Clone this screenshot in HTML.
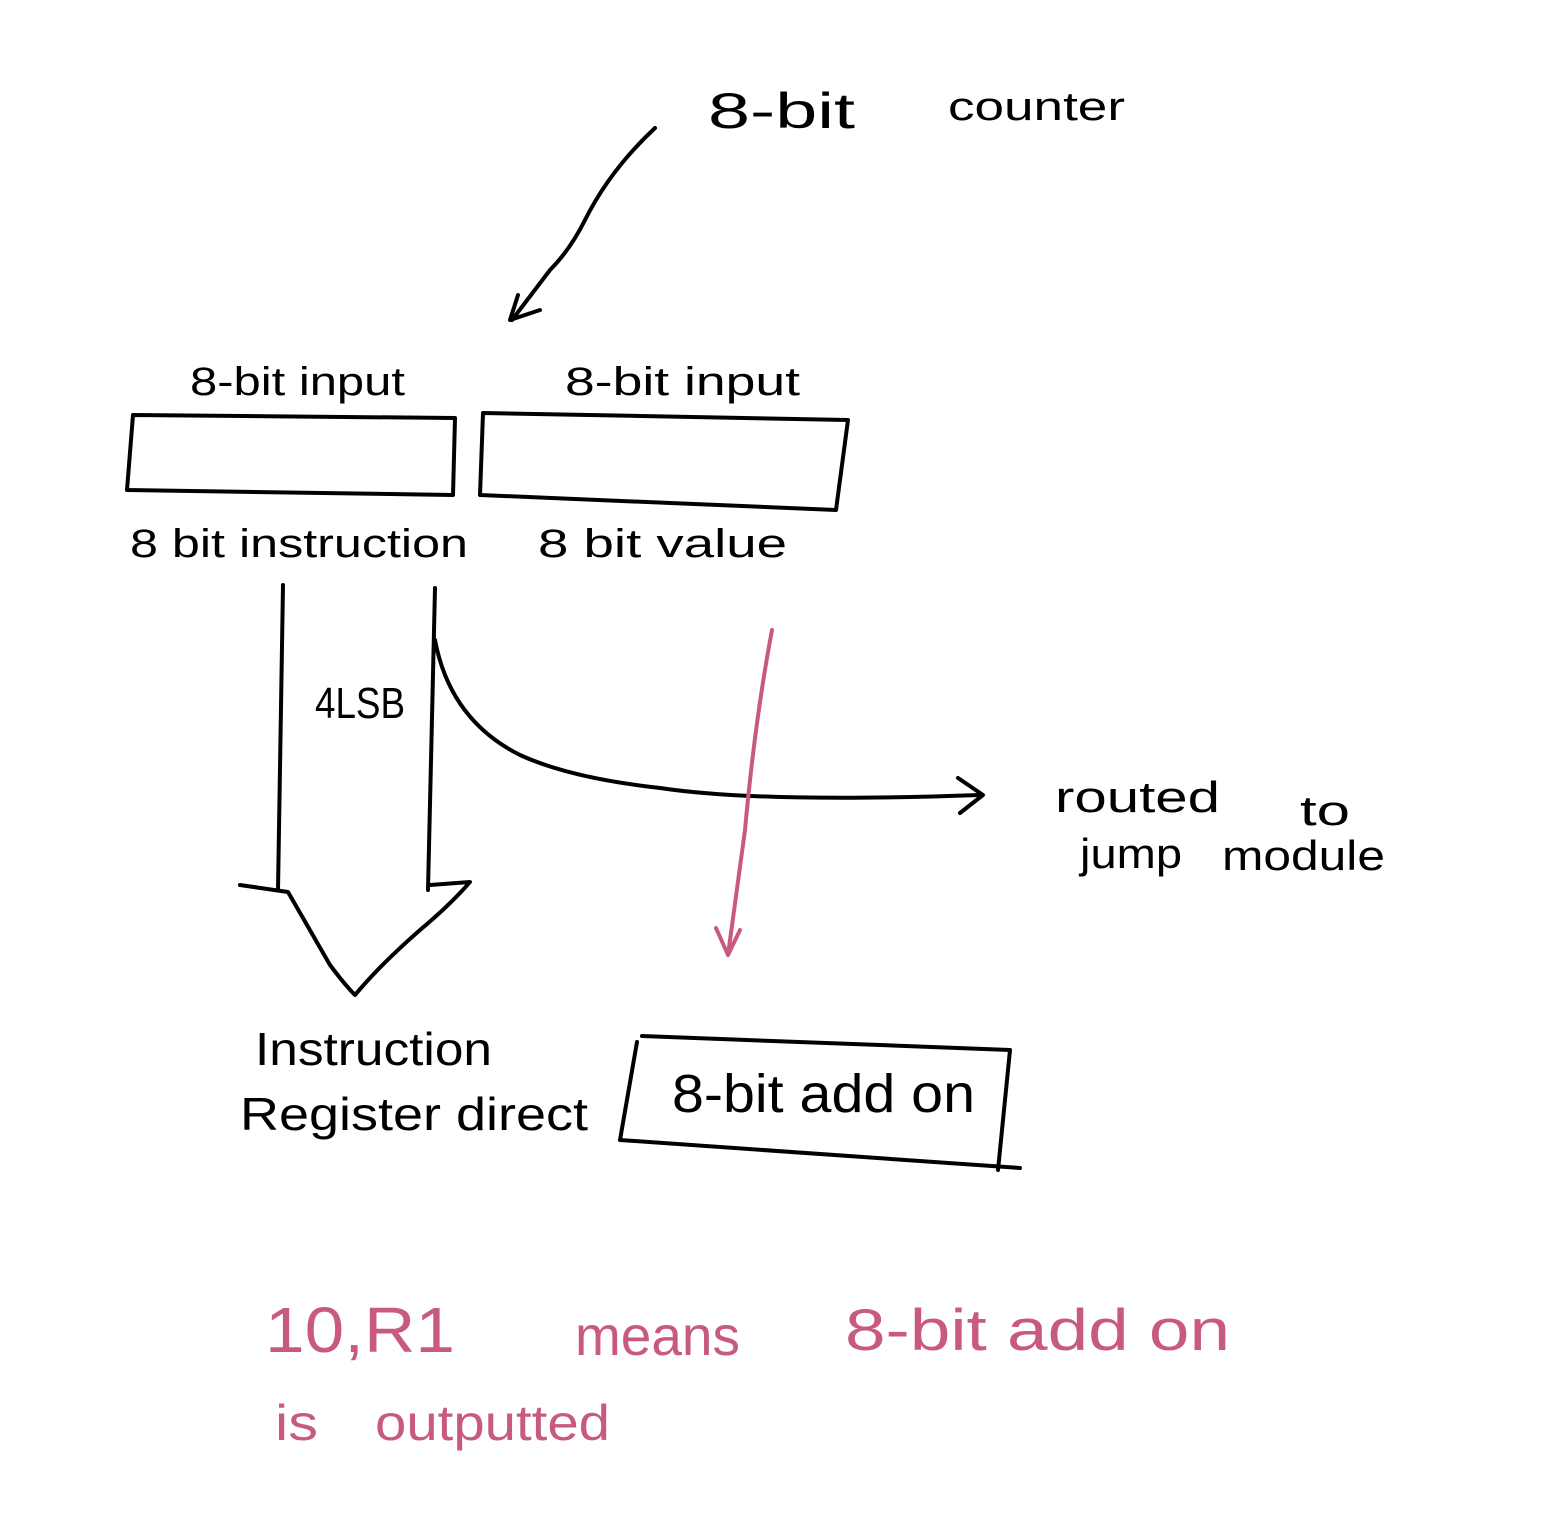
<!DOCTYPE html>
<html><head><meta charset="utf-8"><style>
html,body{margin:0;padding:0;background:#fff;width:1564px;height:1527px;overflow:hidden}
svg{display:block}
text{font-family:"Liberation Sans",sans-serif;fill:#000}
.p{fill:#c85a80}
</style></head><body>
<svg width="1564" height="1527" viewBox="0 0 1564 1527" fill="none" stroke="#000" stroke-width="4" stroke-linecap="round" stroke-linejoin="round">
<g stroke="none" lengthAdjust="spacingAndGlyphs">
<text x="708" y="128" font-size="50" textLength="147" lengthAdjust="spacingAndGlyphs">8-bit</text>
<text x="948" y="120" font-size="40" textLength="177" lengthAdjust="spacingAndGlyphs">counter</text>
<text x="190" y="395" font-size="40" textLength="215" lengthAdjust="spacingAndGlyphs">8-bit input</text>
<text x="565" y="395" font-size="40" textLength="235" lengthAdjust="spacingAndGlyphs">8-bit input</text>
<text x="130" y="557" font-size="40" textLength="338" lengthAdjust="spacingAndGlyphs">8 bit instruction</text>
<text x="538" y="557" font-size="40" textLength="249" lengthAdjust="spacingAndGlyphs">8 bit value</text>
<text x="315" y="718" font-size="44" textLength="90" lengthAdjust="spacingAndGlyphs">4LSB</text>
<text x="1055" y="812" font-size="44" textLength="165" lengthAdjust="spacingAndGlyphs">routed</text>
<text x="1300" y="825" font-size="42" textLength="50" lengthAdjust="spacingAndGlyphs">to</text>
<text x="1080" y="868" font-size="42" textLength="102" lengthAdjust="spacingAndGlyphs">jump</text>
<text x="1222" y="870" font-size="42" textLength="163" lengthAdjust="spacingAndGlyphs">module</text>
<text x="255" y="1065" font-size="46" textLength="237" lengthAdjust="spacingAndGlyphs">Instruction</text>
<text x="240" y="1130" font-size="46" textLength="348" lengthAdjust="spacingAndGlyphs">Register direct</text>
<text x="672" y="1112" font-size="54" textLength="303" lengthAdjust="spacingAndGlyphs">8-bit add on</text>
<text x="265" y="1352" font-size="64" class="p" textLength="190" lengthAdjust="spacingAndGlyphs">10,R1</text>
<text x="575" y="1355" font-size="56" class="p" textLength="165" lengthAdjust="spacingAndGlyphs">means</text>
<text x="845" y="1350" font-size="58" class="p" textLength="385" lengthAdjust="spacingAndGlyphs">8-bit add on</text>
<text x="275" y="1440" font-size="50" class="p" textLength="43" lengthAdjust="spacingAndGlyphs">is</text>
<text x="375" y="1440" font-size="50" class="p" textLength="235" lengthAdjust="spacingAndGlyphs">outputted</text>
</g>
<path d="M655 128 Q610 170 585 220 Q570 250 550 270 L512 320"/>
<path d="M518 295 L510 320 L540 310"/>
<path d="M133 415 L455 418 L453 495 L127 490 Z"/>
<path d="M483 413 L848 420 L836 510 L480 495 Z"/>
<path d="M283 585 L278 890"/>
<path d="M435 588 L428 890"/>
<path d="M435 640 Q450 720 520 755 Q570 778 660 788 Q760 803 980 795"/>
<path d="M958 778 L983 795 L960 813"/>
<path d="M240 885 L288 892 Q310 930 330 965 Q345 985 355 995 Q380 965 420 930 Q450 905 470 882 L430 885"/>
<path d="M772 630 Q755 720 745 830 L728 955" stroke="#c85a80"/>
<path d="M716 928 L728 955 L740 930" stroke="#c85a80"/>
<path d="M642 1036 L1010 1050 L998 1170"/>
<path d="M637 1042 L620 1140 L1020 1168"/>
</svg>
</body></html>
